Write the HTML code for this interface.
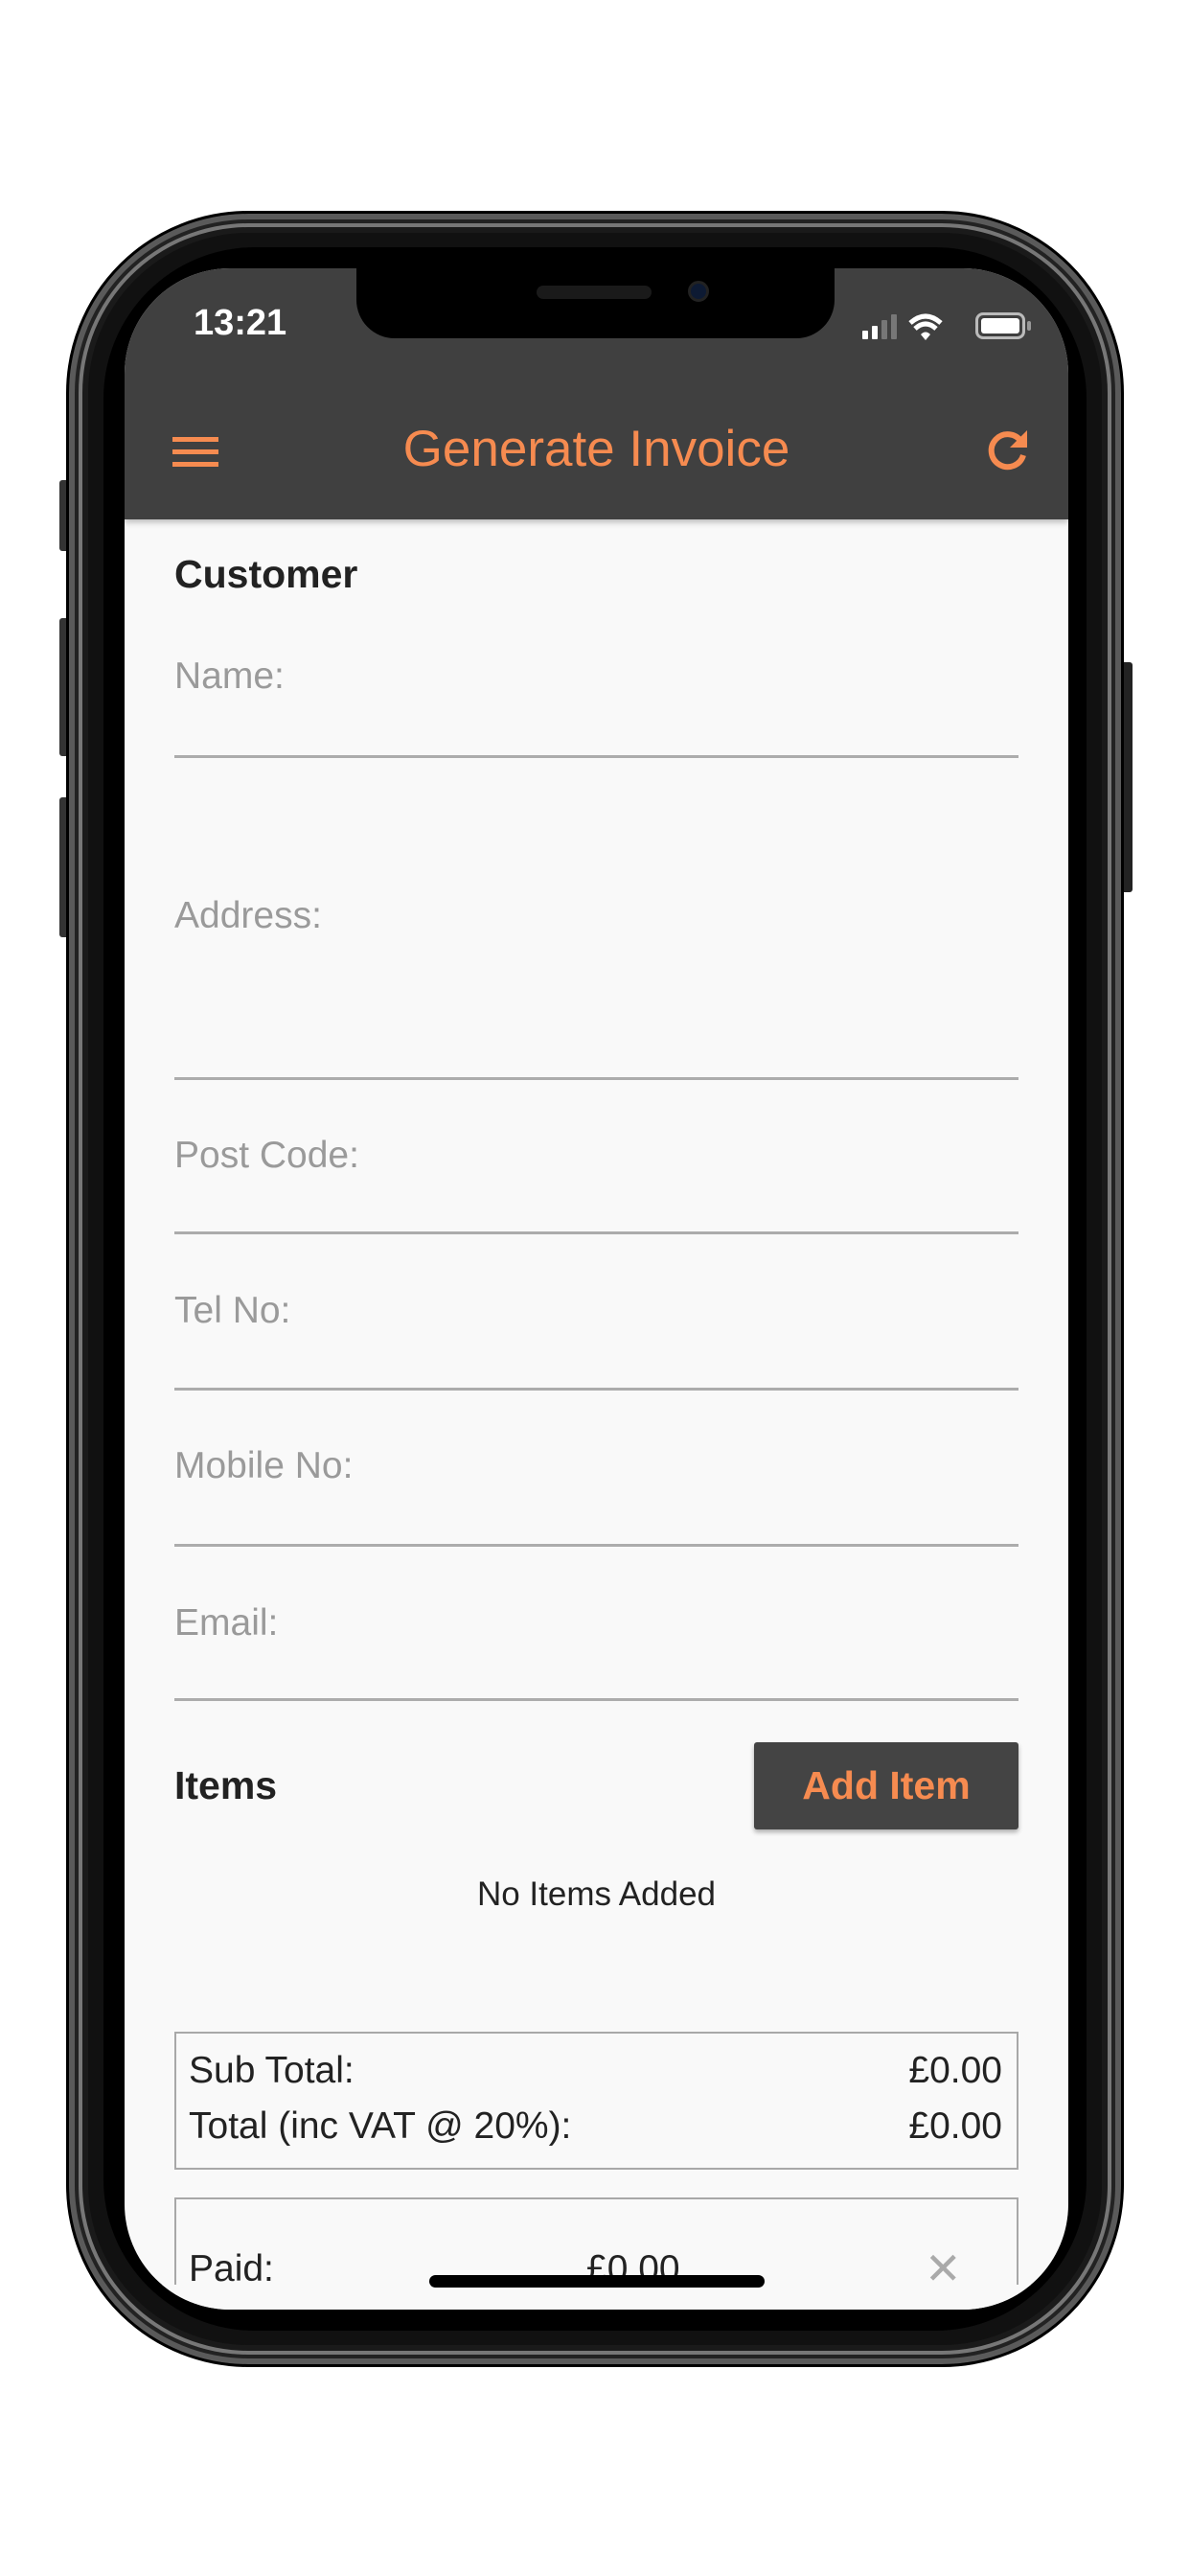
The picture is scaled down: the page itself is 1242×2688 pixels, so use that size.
<!DOCTYPE html>
<html><head><meta charset="utf-8"><style>
*{margin:0;padding:0;box-sizing:border-box}
body{width:1242px;height:2688px;background:#fff;position:relative;overflow:hidden;font-family:"Liberation Sans",sans-serif}
.abs{position:absolute}
.outer{left:69px;top:220px;width:1104px;height:2250px;border-radius:190px;background:#111;border:3px solid #000;box-shadow:inset 0 0 0 6px #5a5a5a,inset 0 0 0 10px #222,inset 0 0 0 14px #777,inset 0 0 0 20px #1a1a1a}
.bezel{left:108px;top:258px;width:1026px;height:2174px;border-radius:158px;background:#000}
.screen{left:130px;top:280px;width:985px;height:2130px;border-radius:110px;background:#f9f9f9;overflow:hidden}
.hdr{left:0;top:0;width:985px;height:262px;background:#404040;box-shadow:0 3px 6px rgba(0,0,0,.25)}
.notch{left:242px;top:0;width:499px;height:73px;background:#000;border-radius:0 0 40px 40px}
.lbl{left:52px;color:#9a9a9a;font-size:39px}
.line{left:52px;width:881px;height:3px;background:#acacac}
.btn{background:#444;border-radius:3px}
</style></head><body>
<div class="abs" style="left:62px;top:501px;width:10px;height:74px;background:#333;border-radius:3px"></div>
<div class="abs" style="left:62px;top:645px;width:10px;height:144px;background:#333;border-radius:3px"></div>
<div class="abs" style="left:62px;top:832px;width:10px;height:146px;background:#333;border-radius:3px"></div>
<div class="abs" style="left:1170px;top:691px;width:12px;height:240px;background:#222;border-radius:3px"></div>
<div class="abs outer"></div>
<div class="abs bezel"></div>
<div class="abs screen">
  <div class="abs hdr"></div>
  <div class="abs notch"></div>
  <div class="abs" style="left:430px;top:18px;width:120px;height:14px;border-radius:7px;background:#1a1a1a"></div>
  <div class="abs" style="left:588px;top:13px;width:22px;height:22px;border-radius:50%;background:#0d1a33;border:3px solid #222"></div>
  <div class="abs" style="left:72px;top:36px;color:#fff;font-size:38px;font-weight:bold">13:21</div>
  <svg class="abs" style="left:770px;top:45px" width="110" height="36" viewBox="0 0 110 36">
    <rect x="0" y="20" width="6" height="9" rx="1" fill="#fff"/><rect x="10" y="15" width="6" height="14" rx="1" fill="#fff"/><rect x="20" y="9" width="6" height="20" rx="1" fill="#777"/><rect x="30" y="3" width="6" height="26" rx="1" fill="#777"/>
    <path d="M50 12 Q66 -2 82 12" stroke="#fff" stroke-width="5" fill="none"/><path d="M55 18 Q66 8 77 18" stroke="#fff" stroke-width="5" fill="none"/><path d="M61 24 L66 30 L71 24 Q66 19 61 24Z" fill="#fff"/>
  </svg>
  <div class="abs" style="left:888px;top:46px;width:52px;height:28px;border:3px solid #bbb;border-radius:8px;padding:3px"><div style="width:100%;height:100%;background:#fff;border-radius:3px"></div></div>
  <div class="abs" style="left:942px;top:55px;width:4px;height:10px;background:#999;border-radius:2px"></div>
  <div class="abs" style="left:50px;top:176px;width:48px;height:5px;background:#f68b50"></div>
  <div class="abs" style="left:50px;top:189px;width:48px;height:5px;background:#f68b50"></div>
  <div class="abs" style="left:50px;top:202px;width:48px;height:5px;background:#f68b50"></div>
  <div class="abs" style="left:0;top:158px;width:985px;text-align:center;color:#f68b50;font-size:53px">Generate Invoice</div>
  <svg class="abs" style="left:898px;top:165px" width="48" height="48" viewBox="0 0 48 48">
    <path d="M38 16 A17 17 0 1 0 40 30" stroke="#f68b50" stroke-width="6" fill="none"/>
    <path d="M44 4 L44 22 L26 22Z" fill="#f68b50"/>
  </svg>
  <div class="abs" style="left:52px;top:296px;font-size:41px;font-weight:bold;color:#222">Customer</div>
  <div class="abs lbl" style="top:404px">Name:</div><div class="abs line" style="top:508px"></div>
  <div class="abs lbl" style="top:654px">Address:</div><div class="abs line" style="top:844px"></div>
  <div class="abs lbl" style="top:904px">Post Code:</div><div class="abs line" style="top:1005px"></div>
  <div class="abs lbl" style="top:1066px">Tel No:</div><div class="abs line" style="top:1168px"></div>
  <div class="abs lbl" style="top:1228px">Mobile No:</div><div class="abs line" style="top:1331px"></div>
  <div class="abs lbl" style="top:1392px">Email:</div><div class="abs line" style="top:1492px"></div>
  <div class="abs" style="left:52px;top:1560px;font-size:41px;font-weight:bold;color:#222">Items</div>
  <div class="abs btn" style="left:657px;top:1538px;width:276px;height:91px;box-shadow:0 3px 5px rgba(0,0,0,.3);color:#f68b50;font-size:41px;font-weight:bold;text-align:center;line-height:91px">Add Item</div>
  <div class="abs" style="left:0;top:1677px;width:985px;text-align:center;font-size:35px;color:#222">No Items Added</div>
  <div class="abs" style="left:52px;top:1840px;width:881px;height:144px;border:2px solid #a8a8a8"></div>
  <div class="abs" style="left:67px;top:1859px;font-size:39px;color:#222">Sub Total:</div>
  <div class="abs" style="right:69px;top:1859px;font-size:39px;color:#222">£0.00</div>
  <div class="abs" style="left:67px;top:1917px;font-size:39px;color:#222">Total (inc VAT @ 20%):</div>
  <div class="abs" style="right:69px;top:1917px;font-size:39px;color:#222">£0.00</div>
  <div class="abs" style="left:52px;top:2013px;width:881px;height:200px;border:2px solid #a8a8a8"></div>
  <div class="abs" style="left:67px;top:2066px;font-size:39px;color:#222">Paid:</div>
  <div class="abs" style="left:482px;top:2066px;font-size:39px;color:#222">£0.00</div>
  <div class="abs" style="left:835px;top:2060px;font-size:46px;color:#aaa">✕</div>
  <div class="abs" style="left:0;top:2104px;width:985px;height:40px;background:#f9f9f9"></div>
  <div class="abs" style="left:318px;top:2094px;width:350px;height:13px;border-radius:7px;background:#000"></div>
</div>
</body></html>
